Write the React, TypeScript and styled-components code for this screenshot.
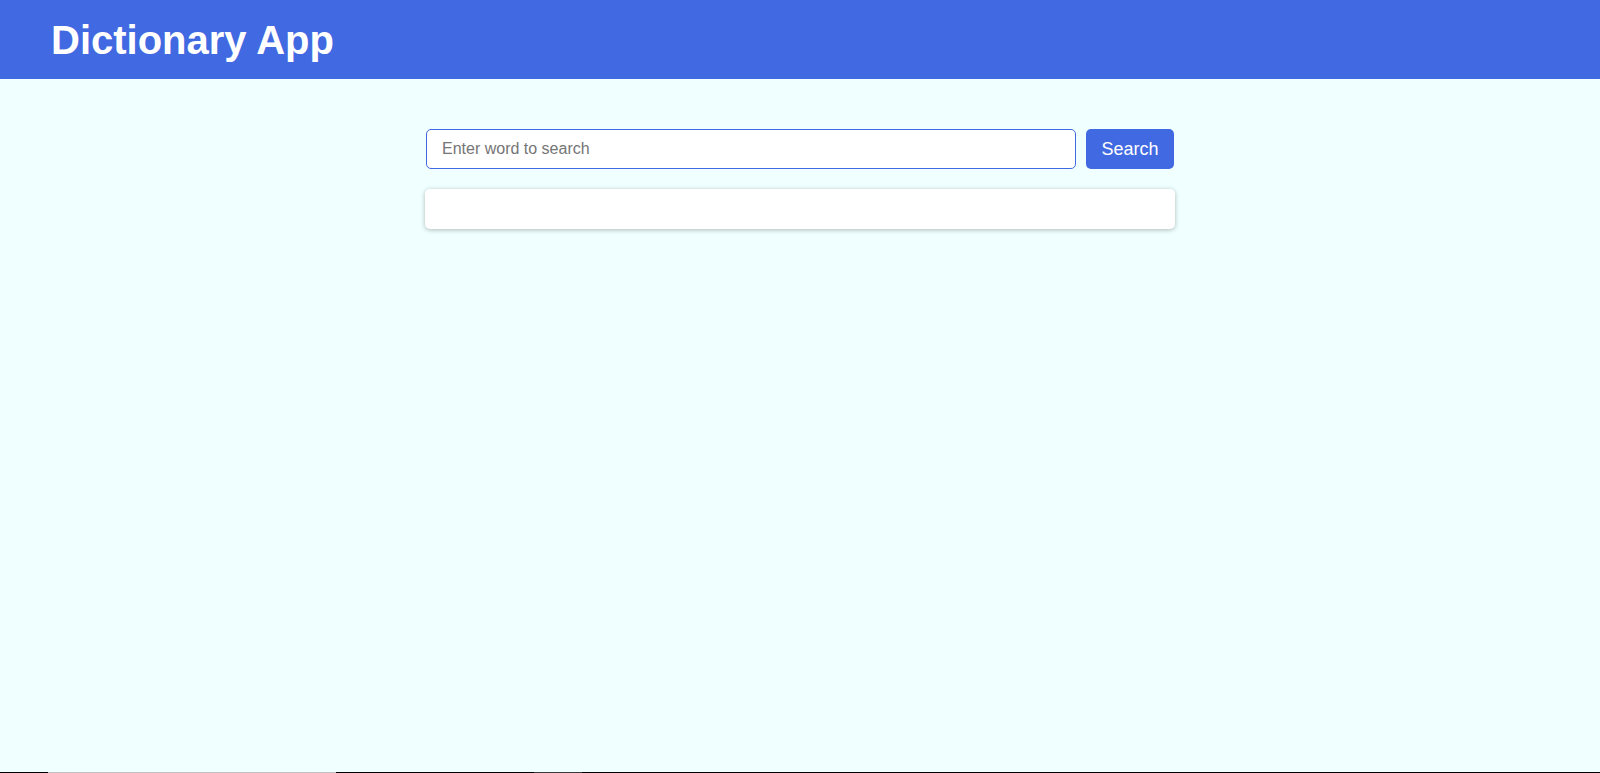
import React, { useState } from 'react';
import styled, { createGlobalStyle } from 'styled-components';

const GlobalStyle = createGlobalStyle`
  * {
    box-sizing: border-box;
  }

  html,
  body {
    margin: 0;
    padding: 0;
    height: 100%;
  }

  body {
    font-family: 'Liberation Sans', Arial, sans-serif;
    background: azure;
  }
`;

const App = () => {
  const [word, setWord] = useState('');
  const [result, setResult] = useState<string | null>(null);

  const onSearch = (e: React.FormEvent) => {
    e.preventDefault();
    setResult(null);
  };

  return (
    <>
      <GlobalStyle />
      <Page>
        <Header>
          <Title>Dictionary App</Title>
        </Header>
        <Main>
          <Container>
            <SearchForm onSubmit={onSearch}>
              <SearchInput
                type="text"
                placeholder="Enter word to search"
                value={word}
                onChange={(e) => setWord(e.target.value)}
              />
              <SearchButton type="submit">Search</SearchButton>
            </SearchForm>
            <ResultCard>{result}</ResultCard>
          </Container>
        </Main>
        <BottomEdge />
      </Page>
    </>
  );
};

const Page = styled.div`
  min-height: 100vh;
  display: flex;
  flex-direction: column;
  background: azure;
`;

const Header = styled.header`
  height: 79px;
  display: flex;
  align-items: center;
  padding: 0 51px;
  background: royalblue;
`;

const Title = styled.h1`
  margin: 0;
  padding-top: 2px;
  font-size: 40px;
  font-weight: 700;
  color: #fff;
`;

const Main = styled.main`
  flex: 1;
  display: flex;
  justify-content: center;
  padding-top: 50px;
`;

const Container = styled.div`
  width: 750px;
  display: flex;
  flex-direction: column;
  gap: 20px;
`;

const SearchForm = styled.form`
  display: flex;
  gap: 10px;
  padding: 0 1px;
`;

const SearchInput = styled.input`
  flex: 1;
  height: 40px;
  padding: 0 15px;
  border: 1px solid royalblue;
  border-radius: 5px;
  background: #fff;
  font-family: 'Liberation Sans', Arial, sans-serif;
  font-size: 16px;
  color: #333;
  outline: none;

  &::placeholder {
    color: #757575;
  }
`;

const SearchButton = styled.button`
  width: 88px;
  height: 40px;
  border: none;
  border-radius: 5px;
  background: royalblue;
  color: #fff;
  font-family: 'Liberation Sans', Arial, sans-serif;
  font-size: 18px;
  cursor: pointer;
`;

const ResultCard = styled.div`
  min-height: 40px;
  padding: 20px;
  border-radius: 5px;
  background: #fff;
  box-shadow: 0 1px 5px rgba(0, 0, 0, 0.28);
`;

const BottomEdge = styled.div`
  height: 1px;
  background: linear-gradient(
    to right,
    #000 0,
    #000 48px,
    #c0c0c0 48px,
    #c0c0c0 336px,
    #000 336px,
    #000 534px,
    #3a3a3a 534px,
    #3a3a3a 582px,
    #000 582px
  );
`;

export default App;
